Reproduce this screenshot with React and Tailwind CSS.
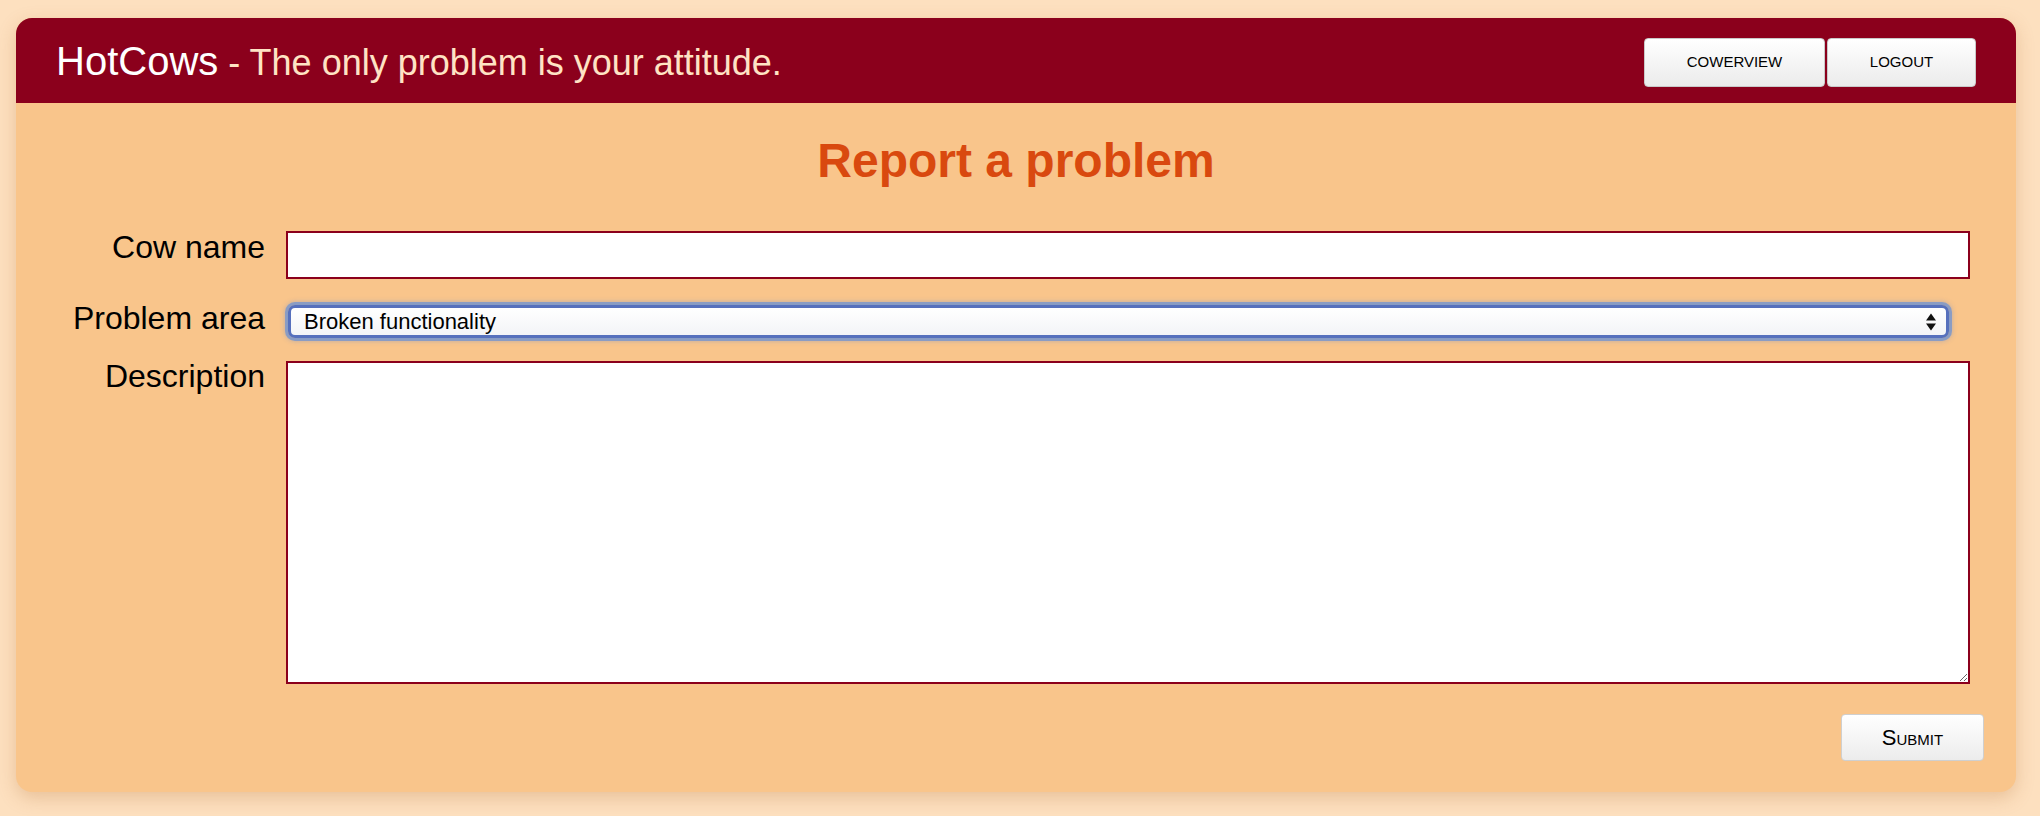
import React, { useState } from 'react';

const areas = ['Broken functionality', 'Wrong information', 'Design', 'Other'];

function HeaderButton({ children, className = '' }) {
    return (
        <button
            className={`h-[49px] rounded-[4px] border border-[#c9c9c9] bg-gradient-to-b from-white to-[#ebebeb] text-[15px] text-black uppercase ${className}`}
        >
            {children}
        </button>
    );
}

export default function App() {
    const [cowName, setCowName] = useState('');
    const [area, setArea] = useState(areas[0]);
    const [description, setDescription] = useState('');

    return (
        <div className="min-h-screen bg-[#fde0bf] pt-[18px] pb-[25px] px-[16px] font-['Liberation_Sans',Arial,Helvetica,sans-serif]">
            <div className="w-[2000px] rounded-[16px] overflow-hidden bg-[#f9c58b] shadow-[0_6px_18px_rgba(170,100,40,0.25)]">

                {/* header */}
                <div className="h-[85px] bg-[#8b001c] flex items-center justify-between pl-[40px] pr-[40px]">
                    <div className="leading-none whitespace-nowrap">
                        <span className="text-white text-[40px]">HotCows</span>
                        <span className="text-[#ffe3c4] text-[36px]"> - The only problem is your attitude.</span>
                    </div>
                    <div className="flex gap-[2px] mt-[4px]">
                        <HeaderButton className="w-[181px]">Cowerview</HeaderButton>
                        <HeaderButton className="w-[149px]">Logout</HeaderButton>
                    </div>
                </div>

                {/* body */}
                <div className="pt-[34px] pb-[31px]">
                    <h1 className="text-center text-[48px] leading-none font-bold text-[#d9490f]">
                        Report a problem
                    </h1>

                    <form className="mt-[46px] flex flex-col gap-[22px] pr-[46px]" onSubmit={(e) => e.preventDefault()}>
                        <div className="flex items-start gap-[21px]">
                            <label className="w-[249px] text-right text-[32px] leading-none text-black">Cow name</label>
                            <input
                                type="text"
                                value={cowName}
                                onChange={(e) => setCowName(e.target.value)}
                                className="flex-1 h-[48px] bg-white border-2 border-[#8b001c] outline-none px-2 text-[22px]"
                            />
                        </div>

                        <div className="flex items-start gap-[21px]">
                            <label className="w-[249px] text-right text-[32px] leading-none text-black pt-[1px]">Problem area</label>
                            <div className="relative flex-1 mt-[4px] ml-[2px] mr-[21px]">
                                <select
                                    value={area}
                                    onChange={(e) => setArea(e.target.value)}
                                    className="appearance-none block w-full h-[33px] py-0 leading-[27px] rounded-[7px] border-[3px] border-[#5670bd] bg-gradient-to-b from-white to-[#f3f4f7] pl-[13px] text-[22px] text-black outline-none shadow-[0_0_0_3px_rgba(120,150,205,0.8),0_0_5px_3px_rgba(110,140,200,0.45)]"
                                >
                                    {areas.map(a => <option key={a}>{a}</option>)}
                                </select>
                                <svg className="absolute right-[12px] top-1/2 -translate-y-1/2 pointer-events-none" width="12" height="20" viewBox="0 0 12 20">
                                    <path d="M6 1.5 L11 8.5 L1 8.5 Z" fill="#111" />
                                    <path d="M6 18.5 L11 11.5 L1 11.5 Z" fill="#111" />
                                </svg>
                            </div>
                        </div>

                        <div className="flex items-start gap-[21px]">
                            <label className="w-[249px] text-right text-[32px] leading-none text-black">Description</label>
                            <textarea
                                value={description}
                                onChange={(e) => setDescription(e.target.value)}
                                className="flex-1 h-[323px] mt-[1px] bg-white border-2 border-[#8b001c] outline-none p-2 text-[22px]"
                            />
                        </div>
                    </form>

                    <div className="flex justify-end pr-[32px] mt-[30px]">
                        <button className="w-[143px] h-[47px] rounded-[4px] border border-[#cfcfcf] bg-gradient-to-b from-white to-[#ececec] text-[22px] [font-variant:small-caps] text-black">
                            Submit
                        </button>
                    </div>
                </div>
            </div>
        </div>
    );
}
